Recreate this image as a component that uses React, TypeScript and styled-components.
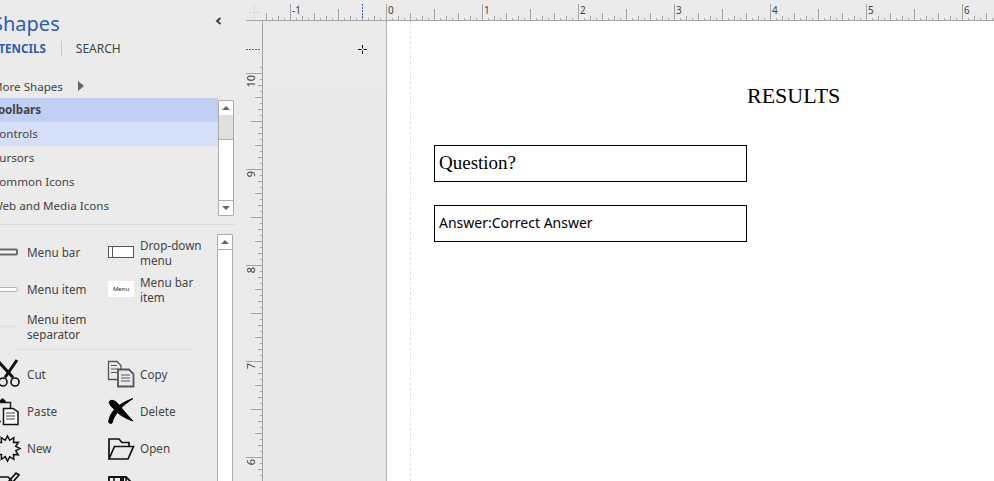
import styled, { createGlobalStyle } from "styled-components";

const Global = createGlobalStyle`
  html, body {
    margin: 0;
    padding: 0;
    background: #ebebeb;
  }
`;

const Window = styled.div`
  display: flex;
  width: 994px;
  height: 481px;
  overflow: hidden;
  font-family: "Noto Sans", sans-serif;
  color: #444;
`;

/* ---------- shapes panel ---------- */
const Panel = styled.aside`
  flex: 0 0 246px;
  height: 481px;
  overflow: hidden;
  background: #ebebeb;
`;
const PanelInner = styled.div`
  display: flex;
  flex-direction: column;
  width: 254px;
  margin-left: -8px;
  padding-top: 9px;
`;
const TitleRow = styled.div`
  display: flex;
  justify-content: space-between;
  width: 231px;
  height: 28px;
`;
const Title = styled.h1`
  margin: 1px 0 0;
  font-size: 20px;
  font-weight: 400;
  line-height: 27px;
  color: #2f5cb0;
`;
const Chevron = styled.svg`
  margin-top: 8px;
`;
const Tabs = styled.div`
  display: flex;
  align-items: center;
  height: 20px;
  margin-top: 1px;
  font-size: 12px;
`;
const ActiveTab = styled.span`
  font-weight: 700;
  color: #2f5cb0;
  font-size: 11.6px;
`;
const TabDivider = styled.span`
  width: 1px;
  height: 15px;
  margin: 0 14px 0 15px;
  background: #c8c8c8;
`;
const MoreShapes = styled.div`
  display: flex;
  align-items: center;
  gap: 15px;
  height: 24px;
  margin-top: 16px;
  font-size: 11.6px;
`;
const StencilPane = styled.div`
  display: flex;
  width: 243px;
  height: 120px;
`;
const StencilList = styled.ul`
  flex: 0 0 226px;
  margin: 0;
  padding: 0;
  list-style: none;
`;
const StencilRow = styled.li<{ $tone?: "active" | "hover" }>`
  height: 24px;
  font-size: 11.6px;
  line-height: 24px;
  font-weight: ${(p) => (p.$tone === "active" ? 700 : 400)};
  background: ${(p) =>
    p.$tone === "active" ? "#c1cff2" : p.$tone === "hover" ? "#d6dff8" : "transparent"};
`;
const Scrollbar = styled.div<{ $clip?: boolean }>`
  display: flex;
  flex-direction: column;
  flex: 0 0 16px;
  box-sizing: border-box;
  margin-top: 2px;
  height: ${(p) => (p.$clip ? "260px" : "116px")};
  border: 1px solid #ababab;
  background: #e0e0e0;
  border-radius: 1px;
`;
const ScrollButton = styled.div`
  display: flex;
  align-items: center;
  justify-content: center;
  flex: 0 0 14px;
  background: #fff;
`;
const Arrow = styled.span<{ $down?: boolean }>`
  width: 0;
  height: 0;
  border-left: 4px solid transparent;
  border-right: 4px solid transparent;
  ${(p) => (p.$down ? "border-top: 4px solid #666;" : "border-bottom: 4px solid #666;")}
`;
const ScrollTrack = styled.div`
  flex: 0 0 24px;
`;
const ScrollThumb = styled.div`
  flex: 1;
  background: #fff;
  border-top: 1px solid #ababab;
  border-bottom: 1px solid #ababab;
`;
const PaneRule = styled.div`
  width: 243px;
  height: 1px;
  margin-top: 6px;
  background: #dcdcdc;
`;
const ShapesPane = styled.div`
  display: flex;
  width: 242px;
  margin-top: 7px;
`;
const ShapesBody = styled.div`
  flex: 0 0 224px;
  padding-top: 2px;
`;
const ShapeGrid = styled.div`
  display: grid;
  grid-template-columns: 113px 110px;
  grid-auto-rows: 37px;
  padding-left: 2px;
`;
const ShapeItem = styled.div`
  display: flex;
  align-items: center;
  gap: 6px;
  font-size: 11.7px;
  line-height: 15px;
`;
const ShapeIcon = styled.svg`
  flex: 0 0 27px;
  width: 27px;
  height: 27px;
  overflow: visible;
`;
const ShapeRule = styled.div`
  width: 179px;
  height: 1px;
  margin: 4px 0 6px 24px;
  background: #dfdfdf;
`;

/* ---------- workspace ---------- */
const Workspace = styled.main`
  flex: 1;
  display: grid;
  grid-template-columns: 17px 1fr;
  grid-template-rows: 21px 1fr;
  height: 481px;
`;
const RulerSvg = styled.svg`
  display: block;
  shape-rendering: crispEdges;
  font-family: "Noto Sans", sans-serif;
`;
const RulerLabel = styled.text`
  shape-rendering: auto;
  fill: #444;
`;
const Canvas = styled.div`
  display: flex;
  min-height: 0;
`;
const Pasteboard = styled.div`
  position: relative;
  flex: 0 0 123px;
  border-right: 1px solid #aeb2b6;
  background: linear-gradient(#ebebeb, #e8e8e8 40%, #e8e8e8);
`;
const Crosshair = styled.svg`
  position: absolute;
  left: 94px;
  top: 23px;
`;
const Page = styled.div`
  flex: 1;
  display: flex;
  background: #fff;
  padding-left: 23px;
`;
const Margin = styled.div`
  flex: 1;
  padding-left: 23px;
  padding-top: 63px;
  border-left: 1px dashed #e2e2e2;
  color: #000;
`;
const Heading = styled.div`
  margin-left: 313px;
  font-family: "Liberation Serif", serif;
  font-size: 22px;
  line-height: 24px;
`;
const AnswerBox = styled.div<{ $serif?: boolean }>`
  display: flex;
  align-items: center;
  box-sizing: border-box;
  width: 313px;
  height: 37px;
  margin-top: ${(p) => (p.$serif ? 37 : 23)}px;
  padding: 0 0 2px 4px;
  border: 1px solid #000;
  font-family: ${(p) =>
    p.$serif ? `"Liberation Serif", serif` : `"Noto Sans", sans-serif`};
  font-size: ${(p) => (p.$serif ? 19 : 14)}px;
`;

const TICK = "#a4a4a4";
const tickLength = (i: number) => {
  if (i % 16 === 0) return 16;
  if (i % 8 === 0) return 11;
  if (i % 4 === 0) return 7;
  if (i % 2 === 0) return 4;
  return 2;
};

function TopRuler() {
  const originX = 123;
  const ticks = [];
  for (let i = -20; i <= 120; i++) {
    const x = originX + i * 6;
    if (x < 0 || x > 731) continue;
    const len = tickLength(i);
    ticks.push(<rect key={i} x={x} y={20 - len} width={1} height={len} fill={TICK} />);
  }
  const labels = [-1, 0, 1, 2, 3, 4, 5, 6];
  return (
    <RulerSvg width={731} height={21}>
      {ticks}
      <rect x={0} y={20} width={731} height={1} fill={TICK} />
      {labels.map((n) => (
        <RulerLabel key={n} x={originX + n * 96 + 2} y={14} fontSize={10}>
          {n}
        </RulerLabel>
      ))}
      <line x1={99.5} y1={4} x2={99.5} y2={19} stroke="#3a5fc0" strokeDasharray="2 1" />
    </RulerSvg>
  );
}

function LeftRuler() {
  const originY = 73 - 21;
  const ticks = [];
  for (let i = -1; i <= 72; i++) {
    const y = originY + i * 6;
    const len = tickLength(i);
    ticks.push(<rect key={i} x={16 - len} y={y} width={len} height={1} fill={TICK} />);
  }
  return (
    <RulerSvg width={17} height={460}>
      {ticks}
      <rect x={16} y={0} width={1} height={460} fill={TICK} />
      {[10, 9, 8, 7, 6].map((n, i) => {
        const y = originY + i * 96 + 2;
        return (
          <RulerLabel
            key={n}
            x={9}
            y={y}
            fontSize={11}
            textAnchor="end"
            transform={`rotate(-90 9 ${y})`}
          >
            {n}
          </RulerLabel>
        );
      })}
      <line x1={0} y1={28.5} x2={15} y2={28.5} stroke="#4a68b8" strokeDasharray="2 1" />
    </RulerSvg>
  );
}

function Corner() {
  return (
    <RulerSvg width={17} height={21}>
      <path d="M1 12.5H15M8.5 5V19" stroke="#dcdcdc" fill="none" />
      <rect x={0} y={20} width={17} height={1} fill={TICK} />
    </RulerSvg>
  );
}

// twelve pointed burst for the New icon
const burst = Array.from({ length: 24 }, (_, i) => {
  const a = (i * Math.PI) / 12 - Math.PI / 2;
  const r = i % 2 === 0 ? 12.5 : 8.5;
  return `${(13.5 + r * Math.cos(a)).toFixed(1)},${(13.5 + r * Math.sin(a)).toFixed(1)}`;
}).join(" ");

/* icon boxes are 27x27, centred on the row */
const icons: Record<string, React.ReactNode> = {
  menuBar: <rect x="-5" y="10.500" width="28" height="5" rx="1" fill="#f4f4f4" stroke="#6a6a6a" strokeWidth="2" />,
  dropDown: (
    <g fill="none" stroke="#555">
      <rect x="1.500" y="7.500" width="25" height="11" fill="#fff" />
      <path d="M5.500 8V18" />
    </g>
  ),
  menuItem: <rect x="-4" y="11.500" width="27" height="4" rx="1" fill="#fff" stroke="#b4b4b4" />,
  menuBarItem: (
    <g>
      <rect x="1" y="5" width="26" height="16" fill="#fff" />
      <text x="14" y="15" fontSize="6" textAnchor="middle" fill="#222" fontFamily="Noto Sans, sans-serif">
        Menu
      </text>
    </g>
  ),
  separator: <rect x="-4" y="12.500" width="27" height="2" fill="#e1e1e1" />,
  cut: (
    <g fill="none" stroke="#111">
      <path d="M3 -1L19 16.500" strokeWidth="3" />
      <path d="M23 -1L11 16.500" strokeWidth="3" />
      <circle cx="9" cy="21" r="4" strokeWidth="1.600" />
      <circle cx="21" cy="21" r="4" strokeWidth="1.600" />
    </g>
  ),
  copy: (
    <g stroke="#555" fill="#ebebeb">
      <path d="M1.500 0.500H10L14 4.500V18.500H1.500Z" strokeWidth="1.300" />
      <path d="M4 4.500H10M4 8H11M4 11.500H11" fill="none" />
      <path d="M11 8.500H22L26.500 13V25.500H11Z" strokeWidth="1.800" />
      <path d="M14 14H23M14 17H23M14 20H23" fill="none" />
    </g>
  ),
  paste: (
    <g>
      <path d="M-1 4.500H16.500V11M-1 23.500H7" fill="none" stroke="#222" strokeWidth="1.500" />
      <path d="M5 4.500C5 2 7 2 7.500 0.500H9.500C10 2 12 2 12 4.500Z" fill="#111" />
      <path d="M9.500 10.500H19L24 14V26.500H9.500Z" fill="#fff" stroke="#111" strokeWidth="1.500" />
      <path d="M12 15H21M12 18H21M12 21H21" stroke="#444" />
    </g>
  ),
  del: (
    <g fill="#000" stroke="#000">
      <path d="M2 4C4 1 8 2 12 7C16 12 21 18 26 23C20 21 14 18 10 14C7 11 3 8 2 4Z" />
      <path d="M26 0.500C22 3 17 7 13 11C9 16 6 20 5 25C3 26 1 25 2 22C3 16 8 10 13 7C17 4 22 2 26 0.500Z" />
    </g>
  ),
  fresh: <polygon points={burst} fill="none" stroke="#111" strokeWidth="1.500" />,
  open: (
    <path
      d="M2 24V4H12L15 7.500H22V11.500M2 24L7.500 11.500H26.500L21 24Z"
      fill="none"
      stroke="#111"
      strokeWidth="1.700"
    />
  ),
  edit: (
    <g fill="none" stroke="#111" strokeWidth="1.700">
      <path d="M-2 5H14L18 9" />
      <path d="M15 9L22 1L25 3L18 11L14 13Z" />
    </g>
  ),
  save: (
    <g>
      <path d="M2 27V5H19L26 12V27" fill="none" stroke="#111" strokeWidth="1.800" />
      <path d="M7 5V15M19 5V15" stroke="#111" strokeWidth="1.500" />
      <rect x="13" y="5" width="4" height="8" fill="#111" />
    </g>
  ),
};

const stencils = [
  { name: "Toolbars", tone: "active" as const },
  { name: "Controls", tone: "hover" as const },
  { name: "Cursors" },
  { name: "Common Icons" },
  { name: "Web and Media Icons" },
];

type Shape = { icon: string; label?: string } | null;
const uiShapes: Shape[] = [
  { icon: "menuBar", label: "Menu bar" },
  { icon: "dropDown", label: "Drop-down menu" },
  { icon: "menuItem", label: "Menu item" },
  { icon: "menuBarItem", label: "Menu bar item" },
  { icon: "separator", label: "Menu item separator" },
  null,
];
const commonShapes: Shape[] = [
  { icon: "cut", label: "Cut" },
  { icon: "copy", label: "Copy" },
  { icon: "paste", label: "Paste" },
  { icon: "del", label: "Delete" },
  { icon: "fresh", label: "New" },
  { icon: "open", label: "Open" },
  { icon: "edit" },
  { icon: "save" },
];

function ShapeCells({ items }: { items: Shape[] }) {
  return (
    <ShapeGrid>
      {items.map((s, i) =>
        s ? (
          <ShapeItem key={i}>
            <ShapeIcon viewBox="0 0 27 27">{icons[s.icon]}</ShapeIcon>
            {s.label && <span>{s.label}</span>}
          </ShapeItem>
        ) : (
          <div key={i} />
        )
      )}
    </ShapeGrid>
  );
}

export default function App() {
  return (
    <Window>
      <Global />
      <Panel>
        <PanelInner>
          <TitleRow>
            <Title>Shapes</Title>
            <Chevron width="8" height="8" viewBox="0 0 8 8">
              <path d="M5.500 1L2 4L5.500 7" fill="none" stroke="#444" strokeWidth="2" />
            </Chevron>
          </TitleRow>
          <Tabs>
            <ActiveTab>STENCILS</ActiveTab>
            <TabDivider />
            <span>SEARCH</span>
          </Tabs>
          <MoreShapes>
            <span>More Shapes</span>
            <svg width="6" height="10" viewBox="0 0 6 10">
              <path d="M0 0L6 5L0 10Z" fill="#666" />
            </svg>
          </MoreShapes>
          <StencilPane>
            <StencilList>
              {stencils.map((s) => (
                <StencilRow key={s.name} $tone={s.tone}>
                  {s.name}
                </StencilRow>
              ))}
            </StencilList>
            <Scrollbar>
              <ScrollButton>
                <Arrow />
              </ScrollButton>
              <ScrollTrack />
              <ScrollThumb />
              <ScrollButton>
                <Arrow $down />
              </ScrollButton>
            </Scrollbar>
          </StencilPane>
          <PaneRule />
          <ShapesPane>
            <ShapesBody>
              <ShapeCells items={uiShapes} />
              <ShapeRule />
              <ShapeCells items={commonShapes} />
            </ShapesBody>
            <Scrollbar $clip>
              <ScrollButton>
                <Arrow />
              </ScrollButton>
              <ScrollThumb />
            </Scrollbar>
          </ShapesPane>
        </PanelInner>
      </Panel>
      <Workspace>
        <Corner />
        <TopRuler />
        <LeftRuler />
        <Canvas>
          <Pasteboard>
            <Crosshair width="11" height="11" viewBox="0 0 11 11">
              <path d="M5.500 1V4.500M5.500 6.500V10M1 5.500H4.500M6.500 5.500H10" stroke="#111" fill="none" />
            </Crosshair>
          </Pasteboard>
          <Page>
            <Margin>
              <Heading>RESULTS</Heading>
              <AnswerBox $serif>Question?</AnswerBox>
              <AnswerBox>Answer:Correct Answer</AnswerBox>
            </Margin>
          </Page>
        </Canvas>
      </Workspace>
    </Window>
  );
}
